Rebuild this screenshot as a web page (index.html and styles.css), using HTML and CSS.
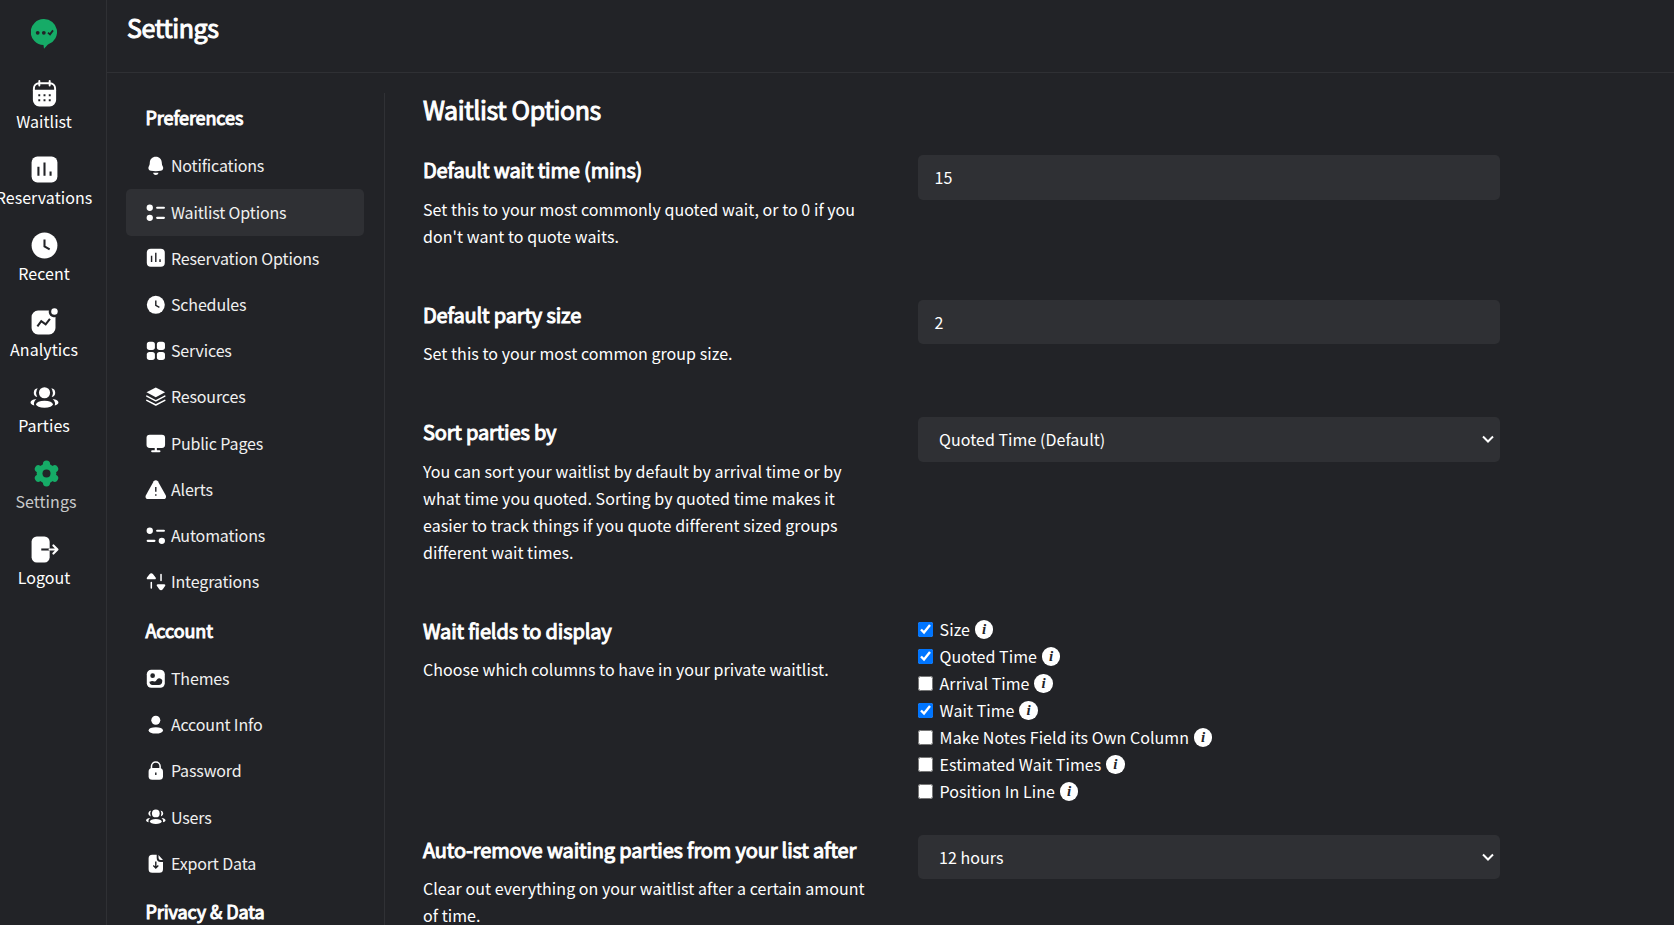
FILE: index.html
```html
<!DOCTYPE html>
<html lang="en">
<head>
<meta charset="utf-8">
<title>Settings</title>
<link rel="stylesheet" href="styles.css">
</head>
<body>
<svg class="defs" aria-hidden="true">
  <symbol id="calendar" viewBox="0 0 24 24"><path fill="none" stroke="currentColor" stroke-width="1.5" d="M3.800 10V8a4 4 0 0 1 4-4h8.400a4 4 0 0 1 4 4v2M8 2.300v3.500M16 2.300v3.500" stroke-linecap="round"/><path fill="currentColor" fill-rule="evenodd" d="M3 9h18v8a5 5 0 0 1-5 5H8a5 5 0 0 1-5-5zM7.200 12.600v1.500h1.500v-1.500zm4.050 0v1.500h1.500v-1.500zm4.050 0v1.500h1.500v-1.500zM7.200 16.500V18h1.500v-1.500zm4.050 0V18h1.500v-1.500zm4.050 0V18h1.500v-1.500z"/></symbol>
  <symbol id="chart" viewBox="0 0 24 24"><rect x="2" y="2" width="20" height="20" rx="4.500" fill="currentColor"/><path class="cut" d="M7.300 9.800v7M12 6.500v10.300M16.700 13.500v3.300"/></symbol>
  <symbol id="clock" viewBox="0 0 24 24"><circle cx="12" cy="12" r="10" fill="currentColor"/><path class="cut" d="M12 7.300v5.400l4 2.300"/></symbol>
  <symbol id="analytics" viewBox="0 0 24 24"><path fill="currentColor" d="M7 3.500h8.400a4.200 4.200 0 0 0 5.100 5.100V17a5 5 0 0 1-5 5H7a5 5 0 0 1-5-5V8.500a5 5 0 0 1 5-5z"/><circle cx="19.700" cy="4.300" r="2.500" fill="currentColor"/><path class="cut" d="M6.500 15.800l3-4 3.400 2.400 3.300-4.200"/></symbol>
  <symbol id="group" viewBox="0 0 24 24"><g fill="currentColor"><circle cx="12" cy="8.300" r="4.300"/><ellipse cx="12" cy="17.200" rx="6.500" ry="2.700"/><path d="M6.700 4.900a3.400 3.400 0 0 0-.3 6.700 6.500 6.500 0 0 1 .3-6.700zM17.300 4.900a3.400 3.400 0 0 1 .3 6.700 6.500 6.500 0 0 0-.3-6.700zM5.700 13.300c-2.700 0-4.500 1.100-4.500 2.600 0 1.100 1.200 1.900 2.900 2.200-.7-1.700-.1-3.500 1.600-4.800zM18.300 13.300c2.700 0 4.500 1.100 4.500 2.600 0 1.100-1.200 1.900-2.900 2.200.7-1.700.1-3.500-1.600-4.800z"/></g></symbol>
  <symbol id="gear" viewBox="0 0 24 24"><g fill="currentColor"><circle cx="12" cy="12" r="7.600"/><g stroke="currentColor" stroke-width="5.600" stroke-linecap="round"><path d="M12 4.800v14.400M5.760 8.400l12.480 7.200M18.240 8.400L5.760 15.600"/></g></g><circle cx="12" cy="12" r="3.100" fill="#222327"/></symbol>
  <symbol id="logout" viewBox="0 0 24 24"><rect x="2" y="2" width="14" height="20" rx="4" fill="currentColor"/><path class="cut" d="M9.500 12H16"/><path class="line" d="M16 12h5.800M18.900 8.900L22 12l-3.100 3.100"/></symbol>
  <symbol id="bell" viewBox="0 0 24 24"><path fill="currentColor" d="M12 2c4 0 6.500 2.900 6.700 6.500.1 2 .3 2.900 1 4 1.200 2 .5 4.600-2.200 5-3.500.7-7.500.7-11 0-2.700-.4-3.400-3-2.200-5 .7-1.100.9-2 1-4C5.500 4.900 8 2 12 2zM9 19.600h6c-.4 1.600-1.500 2.500-3 2.500s-2.600-.9-3-2.500z"/></symbol>
  <symbol id="list" viewBox="0 0 24 24"><circle cx="5.300" cy="6.400" r="3.500" fill="currentColor"/><circle cx="5.300" cy="17.600" r="3.500" fill="currentColor"/><path class="bar" d="M13.500 6.400h7.500M13.500 17.600h7.500"/></symbol>
  <symbol id="tiles" viewBox="0 0 24 24"><g fill="currentColor"><rect x="2" y="2" width="9" height="9" rx="3"/><rect x="13.200" y="2" width="9" height="9" rx="3"/><rect x="2" y="13.200" width="9" height="9" rx="3"/><rect x="13.200" y="13.200" width="9" height="9" rx="3"/></g></symbol>
  <symbol id="layers" viewBox="0 0 24 24"><path fill="currentColor" d="M12 1.800L22.300 7 12 12.400 1.700 7z"/><path class="line" d="M2 11.300l10 5.200 10-5.200M2 15.900l10 5.200 10-5.200"/></symbol>
  <symbol id="monitor" viewBox="0 0 24 24"><rect x="1.700" y="3" width="20.600" height="14.800" rx="3.500" fill="currentColor"/><path class="bar" d="M8 21.400h8M12 17v4"/></symbol>
  <symbol id="alert" viewBox="0 0 24 24"><path fill="currentColor" d="M9.700 2.500c1-1.500 3.600-1.500 4.600 0l8.700 15.600c1.100 2-.1 4.200-2.300 4.200H3.300C1.100 22.300-.1 20.100 1 18.100z"/><path class="cut" d="M12 9v5.200M12 17v1.700"/></symbol>
  <symbol id="auto" viewBox="0 0 24 24"><circle cx="5.300" cy="6.400" r="3.500" fill="currentColor"/><circle cx="18.700" cy="17.600" r="3.500" fill="currentColor"/><path class="bar" d="M13.500 6.400h7.500M3 17.600h7.500"/></symbol>
  <symbol id="arrows" viewBox="0 0 24 24"><path fill="currentColor" d="M5 3.700c1.200-1.600 2.800-1.600 4 0l2.800 3.500c.7 1 .2 2-1 2H3.200c-1.200 0-1.700-1-1-2zM15.800 20.300c1.200 1.600 2.800 1.600 4 0l2.500-3.500c.7-1 .2-2-1-2h-7c-1.200 0-1.700 1-1 2z"/><path class="line" d="M7 12.800v6M17.800 4v6.500"/></symbol>
  <symbol id="image" viewBox="0 0 24 24"><rect x="2" y="2" width="20" height="20" rx="5" fill="currentColor"/><circle cx="8.500" cy="8.500" r="2.600" fill="#222327"/><path fill="#222327" d="M4 16.500l2.500-.8c2-.6 3 .8 4.800.4 2-.4 2.300-3.800 5-4.100 1.700-.2 2.700.8 4.200 2.200v2.200c-.2 2.400-1.500 4.100-4.500 4.100H8c-2.500 0-4-1.500-4-4z" transform="translate(1.500 1.200) scale(.86)"/></symbol>
  <symbol id="user" viewBox="0 0 24 24"><ellipse cx="12" cy="7" rx="5" ry="5" fill="currentColor"/><ellipse cx="12" cy="18.200" rx="8" ry="3.600" fill="currentColor"/></symbol>
  <symbol id="lock" viewBox="0 0 24 24"><path class="line" d="M7.200 11V7a4.800 4.800 0 0 1 9.600 0v4"/><rect x="4" y="9" width="16" height="13" rx="4" fill="currentColor"/><path class="cut" d="M12 13.800v2.800"/></symbol>
  <symbol id="file" viewBox="0 0 24 24"><path fill="currentColor" d="M8 2h5v3.500A4.500 4.500 0 0 0 17.500 10H20v8a4 4 0 0 1-4 4H8a4 4 0 0 1-4-4V6a4 4 0 0 1 4-4zM15 2.200L20 7.800h-2.500A2.500 2.500 0 0 1 15 5.300z"/><path class="cut" d="M12 9.500v7M9.200 14l2.800 2.700 2.800-2.700"/></symbol>
  <symbol id="chevron" viewBox="0 0 12 12"><path fill="none" stroke="currentColor" stroke-width="2" d="M1 3.500l5 5 5-5"/></symbol>
</svg>

<div class="app">
  <nav class="rail">
    <svg class="logo" viewBox="0 0 26 30"><path fill="#16ab67" d="M13 0a13 13 0 0 1 4.800 25.100c-1.600.8-2.800 2.800-4.800 4.700l-.5-3.800A13 13 0 0 1 13 0z"/><g fill="#222327"><circle cx="6.700" cy="13.800" r="1.900"/><circle cx="12.800" cy="13.800" r="1.900"/></g><path d="M17 13.600l2 1.800 3-4" fill="none" stroke="#222327" stroke-width="1.800"/></svg>
    <a class="rail-item"><svg><use href="#calendar"/></svg><span>Waitlist</span></a>
    <a class="rail-item"><svg><use href="#chart"/></svg><span>Reservations</span></a>
    <a class="rail-item"><svg><use href="#clock"/></svg><span>Recent</span></a>
    <a class="rail-item"><svg><use href="#analytics"/></svg><span>Analytics</span></a>
    <a class="rail-item"><svg><use href="#group"/></svg><span>Parties</span></a>
    <a class="rail-item current"><svg><use href="#gear"/></svg><span>Settings</span></a>
    <a class="rail-item"><svg><use href="#logout"/></svg><span>Logout</span></a>
  </nav>

  <div class="page">
    <header class="topbar"><h1>Settings</h1></header>
    <div class="body">
      <aside class="menu">
        <h2>Preferences</h2>
        <a class="menu-item"><svg><use href="#bell"/></svg>Notifications</a>
        <a class="menu-item active"><svg><use href="#list"/></svg>Waitlist Options</a>
        <a class="menu-item"><svg><use href="#chart"/></svg>Reservation Options</a>
        <a class="menu-item"><svg><use href="#clock"/></svg>Schedules</a>
        <a class="menu-item"><svg><use href="#tiles"/></svg>Services</a>
        <a class="menu-item"><svg><use href="#layers"/></svg>Resources</a>
        <a class="menu-item"><svg><use href="#monitor"/></svg>Public Pages</a>
        <a class="menu-item"><svg><use href="#alert"/></svg>Alerts</a>
        <a class="menu-item"><svg><use href="#auto"/></svg>Automations</a>
        <a class="menu-item"><svg><use href="#arrows"/></svg>Integrations</a>
        <h2>Account</h2>
        <a class="menu-item"><svg><use href="#image"/></svg>Themes</a>
        <a class="menu-item"><svg><use href="#user"/></svg>Account Info</a>
        <a class="menu-item"><svg><use href="#lock"/></svg>Password</a>
        <a class="menu-item"><svg><use href="#group"/></svg>Users</a>
        <a class="menu-item"><svg><use href="#file"/></svg>Export Data</a>
        <h2>Privacy &amp; Data</h2>
      </aside>

      <main class="content">
        <h2 class="content-title">Waitlist Options</h2>
        <section class="row">
          <div class="about"><h3>Default wait time (mins)</h3><p>Set this to your most commonly quoted wait, or to 0 if you don't want to quote waits.</p></div>
          <div class="field">15</div>
        </section>
        <section class="row">
          <div class="about"><h3>Default party size</h3><p>Set this to your most common group size.</p></div>
          <div class="field">2</div>
        </section>
        <section class="row">
          <div class="about"><h3>Sort parties by</h3><p>You can sort your waitlist by default by arrival time or by what time you quoted. Sorting by quoted time makes it easier to track things if you quote different sized groups different wait times.</p></div>
          <div class="field select">Quoted Time (Default)<svg><use href="#chevron"/></svg></div>
        </section>
        <section class="row">
          <div class="about"><h3>Wait fields to display</h3><p>Choose which columns to have in your private waitlist.</p></div>
          <div class="checks">
            <label><input type="checkbox" checked>Size<i class="info">i</i></label>
            <label><input type="checkbox" checked>Quoted Time<i class="info">i</i></label>
            <label><input type="checkbox">Arrival Time<i class="info">i</i></label>
            <label><input type="checkbox" checked>Wait Time<i class="info">i</i></label>
            <label><input type="checkbox">Make Notes Field its Own Column<i class="info">i</i></label>
            <label><input type="checkbox">Estimated Wait Times<i class="info">i</i></label>
            <label><input type="checkbox">Position In Line<i class="info">i</i></label>
          </div>
        </section>
        <section class="row">
          <div class="about"><h3>Auto-remove waiting parties from your list after</h3><p>Clear out everything on your waitlist after a certain amount of time.</p></div>
          <div class="field select">12 hours<svg><use href="#chevron"/></svg></div>
        </section>
      </main>
    </div>
  </div>
</div>
</body>
</html>
```

FILE: styles.css
```css
* { box-sizing: border-box; }

body {
  margin: 0;
  height: 925px;
  overflow: hidden;
  background: #222327;
  color: #fff;
  font: 16px/27px "Noto Sans CJK SC", "Noto Sans", sans-serif;
  letter-spacing: 0.05px;
}

h1, h2, h3, p { margin: 0; }
h1, h2, h3 { font-weight: 400; -webkit-text-stroke: 1px currentColor; }

.defs { display: none; }
.cut { fill: none; stroke: #222327; stroke-width: 1.6; }
.line { fill: none; stroke: currentColor; stroke-width: 1.7; stroke-linecap: round; stroke-linejoin: round; }
.bar { fill: none; stroke: currentColor; stroke-width: 2.4; stroke-linecap: round; }

.app { display: flex; height: 925px; overflow: hidden; }

.rail {
  flex: none;
  width: 107px;
  padding-top: 19px;
  border-right: 1px solid #2f3034;
}
.logo { display: block; width: 26px; height: 30px; margin: 0 0 28.5px 31px; }
.rail-item {
  display: flex;
  flex-direction: column;
  align-items: center;
  width: 88px;
  height: 76px;
  white-space: nowrap;
}
.rail-item svg { flex: none; width: 31px; height: 31px; }
.rail-item span { line-height: 25px; }
.rail-item.current { margin-left: 2px; color: #c9cacb; }
.rail-item.current svg { color: #16ab67; }

.page { flex: 1; min-width: 0; }
.topbar {
  height: 73px;
  padding: 9px 20px;
  border-bottom: 1px solid #2f3034;
}
h1 { font-size: 25px; line-height: 36px; letter-spacing: -0.4px; }

.body { display: flex; }
.menu {
  flex: none;
  width: 278px;
  height: 852px;
  margin-top: 20px;
  padding: 1px 20px 0 19px;
  border-right: 1px solid #303135;
}
.menu h2 {
  margin-bottom: 2.7px;
  padding-left: 19.5px;
  font-size: 18px;
  line-height: 46px;
  letter-spacing: -0.08px;
}
.menu h2:not(:first-child) { padding-top: 1.8px; }
.menu-item {
  display: flex;
  align-items: center;
  gap: 4px;
  height: 46.23px;
  padding-left: 19.3px;
  border-radius: 5px;
  color: #f0f0f0;
  letter-spacing: -0.14px;
}
.menu-item svg { width: 21.6px; height: 21.6px; color: #fff; }
.menu-item.active { height: 47px; margin-bottom: -0.77px; background: #2f3034; }

.content { padding: 18px 0 0 38px; }
.content-title { font-size: 25px; line-height: 36px; letter-spacing: -0.38px; margin-bottom: 28px; }
.row {
  display: grid;
  grid-template-columns: 450px 582px;
  column-gap: 45px;
  align-items: start;
  margin-bottom: 30px;
}
.about { padding-bottom: 20px; }
.about h3 { font-size: 20px; line-height: 30px; letter-spacing: -0.15px; margin-bottom: 10.6px; white-space: nowrap; }
.field {
  display: flex;
  align-items: center;
  height: 44.6px;
  padding: 1px 0 0 16.5px;
  border-radius: 5px;
  background: #2f3034;
}
.select { justify-content: space-between; padding: 0 6px 0 21px; }
.select svg { width: 12px; height: 12px; }

.checks label { display: flex; align-items: center; height: 27px; }
.checks input { width: 15px; height: 15px; margin: 0 6.6px 0 0; }
.info {
  width: 18.5px;
  height: 18.5px;
  margin-left: 4.9px;
  border-radius: 50%;
  background: #fff;
  color: #222327;
  font: italic bold 15px/18px "Liberation Serif", serif;
  text-align: center;
}
```
